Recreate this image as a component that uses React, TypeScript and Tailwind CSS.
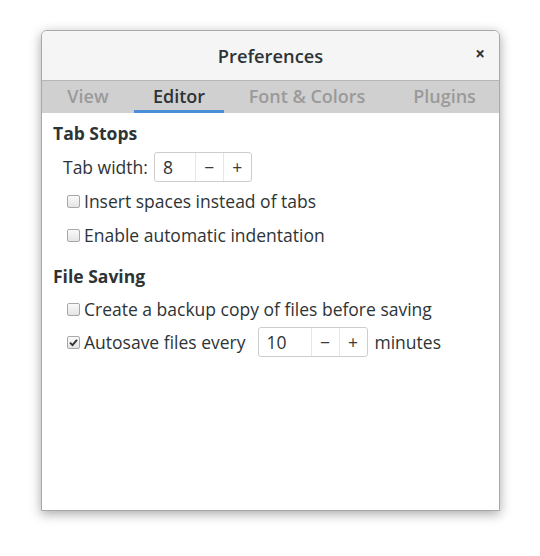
import React from "react";

function CheckBox({ checked }: { checked?: boolean }) {
    return (
        <span className="flex h-[13px] w-[13px] shrink-0 items-center justify-center rounded-[2px] border border-[#a8a8a8] bg-gradient-to-b from-[#fafafa] to-[#e4e4e4]">
            {checked && (
                <svg viewBox="0 0 12 12" className="h-[11px] w-[11px]">
                    <path d="M2.2 6.2 L4.9 8.9 L9.8 3.2" fill="none" stroke="#2e3436" strokeWidth="2.1" />
                </svg>
            )}
        </span>
    );
}

function SpinButton({ value, entryWidth }: { value: string; entryWidth: string }) {
    return (
        <div className="flex h-[30px] items-stretch rounded-[3px] border border-[#cdcdcd] bg-white">
            <div className={`flex items-center pl-[8px] ${entryWidth}`}>{value}</div>
            <div className="flex w-[28px] items-center justify-center border-l border-[#e6e6e6] text-[#3a3a3a]">−</div>
            <div className="flex w-[28px] items-center justify-center border-l border-[#e6e6e6] text-[#3a3a3a]">+</div>
        </div>
    );
}

function CheckRow({ label, checked, children }: { label: string; checked?: boolean; children?: React.ReactNode }) {
    return (
        <div className="flex h-[34px] items-center pl-[14px]">
            <CheckBox checked={checked} />
            <span className="ml-[4px]">{label}</span>
            {children}
        </div>
    );
}

export default function App() {
    const tabs = [
        { label: "View", width: "w-[92px]" },
        { label: "Editor", width: "w-[90px]", active: true },
        { label: "Font & Colors", width: "w-[166px]" },
        { label: "Plugins", width: "flex-1" },
    ];

    return (
        <div className="min-h-[556px] bg-white pt-[30px] text-[17.5px] text-[#2e3436] [font-family:'Open_Sans',sans-serif]">
            <div className="ml-[41px] flex h-[481px] w-[459px] flex-col overflow-hidden rounded-t-[6px] border border-[#a9a9a9] bg-white shadow-[0_3px_12px_rgba(0,0,0,0.35)]">
                <div className="relative flex h-[50px] shrink-0 items-center justify-center border-b border-[#b6b6b6] bg-[#f5f5f5]">
                    <span className="text-[18.3px] font-semibold text-[#2e3436]">Preferences</span>
                    <span className="absolute right-[14px] top-[14px] text-[17px] font-bold leading-none text-[#2e3436]">×</span>
                </div>
                <div className="flex h-[32px] shrink-0 bg-[#d0d0d0]">
                    {tabs.map((tab) => (
                        <div
                            key={tab.label}
                            className={`flex items-center justify-center border-b-[3px] pt-[2px] text-[18px] font-semibold ${tab.width} ${
                                tab.active ? "border-[#4a90d9] text-[#2e3436]" : "border-transparent text-[#9a9a9a]"
                            }`}
                        >
                            {tab.label}
                        </div>
                    ))}
                </div>
                <div className="flex flex-col pl-[11px] pt-[3px]">
                    <div className="flex h-[34px] items-center text-[17.5px] font-bold">Tab Stops</div>
                    <div className="flex h-[34px] items-center pl-[10px]">
                        <span className="mr-[6px]">Tab width:</span>
                        <SpinButton value="8" entryWidth="w-[40px]" />
                    </div>
                    <CheckRow label="Insert spaces instead of tabs" />
                    <CheckRow label="Enable automatic indentation" />
                    <div className="mt-[7px] flex h-[34px] items-center text-[17.5px] font-bold">File Saving</div>
                    <div className="flex h-[32px] items-center pl-[14px]">
                        <CheckBox />
                        <span className="ml-[4px]">Create a backup copy of files before saving</span>
                    </div>
                    <CheckRow label="Autosave files every" checked>
                        <span className="ml-[12px]">
                            <SpinButton value="10" entryWidth="w-[52px]" />
                        </span>
                        <span className="ml-[7px]">minutes</span>
                    </CheckRow>
                </div>
            </div>
        </div>
    );
}
